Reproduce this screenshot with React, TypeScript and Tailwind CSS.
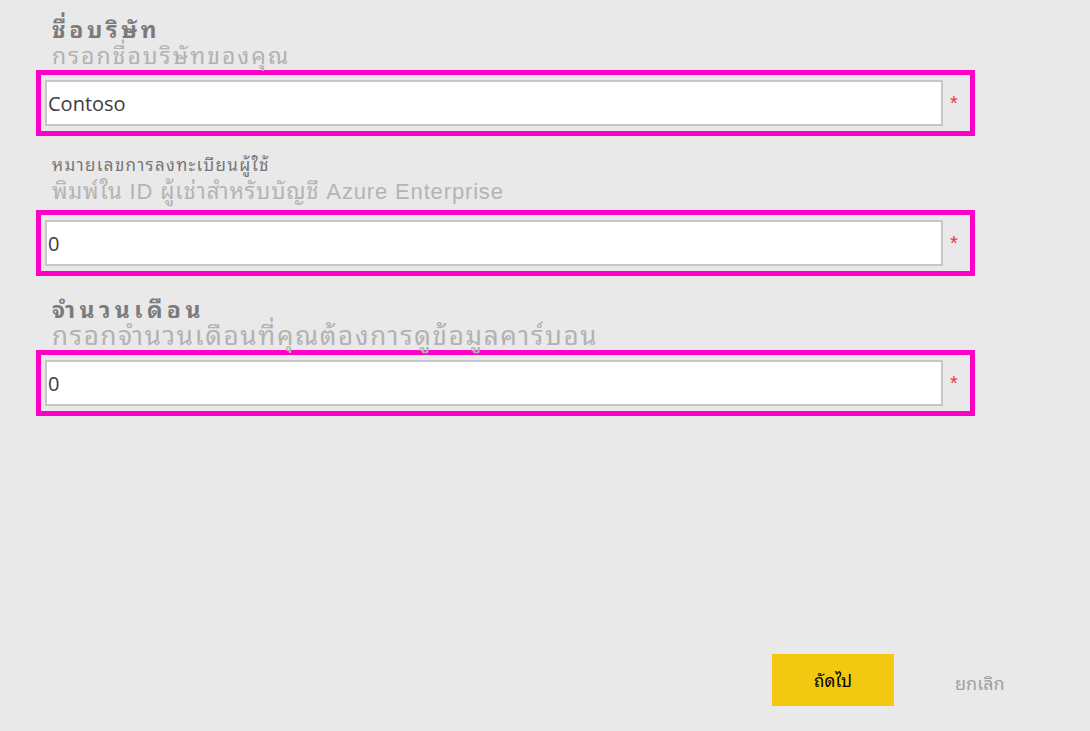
import React, { useState } from 'react';

const thai = '"Noto Sans Thai Looped", "Noto Sans Thai", sans-serif';
const latinThai = '"Liberation Sans", "Noto Sans Thai Looped", sans-serif';

type FieldProps = {
    label: string;
    hint: string;
    value: string;
    labelClass: string;
    hintClass: string;
    areaClass: string;
    onChange: (v: string) => void;
};

const Field: React.FC<FieldProps> = ({ label, hint, value, labelClass, hintClass, areaClass, onChange }) => (
    <div>
        <div className={`flex flex-col justify-end pl-4 ${areaClass}`} style={{ fontFamily: latinThai }}>
            <div className={labelClass}>{label}</div>
            <div className={hintClass}>{hint}</div>
        </div>
        <div className="w-[939px] h-[66px] border-[5px] border-[#ff00c8] flex items-center pl-1 pr-1">
            <input
                type="text"
                value={value}
                onChange={e => onChange(e.target.value)}
                className="w-[898px] h-[46px] bg-white border-2 border-[#c6c6c6] px-[1px] text-[20px] text-[#3c3c3c] outline-none"
                style={{ fontFamily: '"Open Sans", sans-serif' }}
            />
            <span className="ml-[7px] text-[#e8383d] text-[20px] leading-none" style={{ fontFamily: '"Liberation Sans", sans-serif' }}>*</span>
        </div>
    </div>
);

export default function App() {
    const [formData, setFormData] = useState({ company: 'Contoso', tenant: '0', months: '0' });

    return (
        <div className="w-[1090px] h-[731px] bg-[#e9e9e9] flex flex-col pl-[36px]">
            <Field
                label="ชื่อบริษัท"
                hint="กรอกชื่อบริษัทของคุณ"
                value={formData.company}
                onChange={v => setFormData({ ...formData, company: v })}
                areaClass="h-[70px] pb-[1px]"
                labelClass="text-[23px] font-bold text-[#7b7b7b] leading-[26px] tracking-[3.6px]"
                hintClass="text-[23px] text-[#b2b2b2] leading-[26px] tracking-[2px]"
            />
            <Field
                label="หมายเลขการลงทะเบียนผู้ใช้"
                hint="พิมพ์ใน ID ผู้เช่าสำหรับบัญชี Azure Enterprise"
                value={formData.tenant}
                onChange={v => setFormData({ ...formData, tenant: v })}
                areaClass="h-[74px] pb-[4px]"
                labelClass="text-[17px] text-[#777] leading-[24px] tracking-[1.3px]"
                hintClass="text-[22px] text-[#b4b4b4] leading-[28px] tracking-[0.85px]"
            />
            <Field
                label="จำนวนเดือน"
                hint="กรอกจำนวนเดือนที่คุณต้องการดูข้อมูลคาร์บอน"
                value={formData.months}
                onChange={v => setFormData({ ...formData, months: v })}
                areaClass="h-[74px]"
                labelClass="text-[23px] font-bold text-[#7b7b7b] leading-[24px] tracking-[4.4px]"
                hintClass="text-[26px] text-[#b2b2b2] leading-[28px] tracking-[1.7px]"
            />
            <div className="mt-auto mb-[25px] flex items-center" style={{ fontFamily: thai }}>
                <button className="ml-[736px] w-[122px] h-[52px] bg-[#f2c811] text-black text-[17px]">ถัดไป</button>
                <button className="ml-[61px] mt-[4px] text-[#a0a0a0] text-[18px]">ยกเลิก</button>
            </div>
        </div>
    );
}
